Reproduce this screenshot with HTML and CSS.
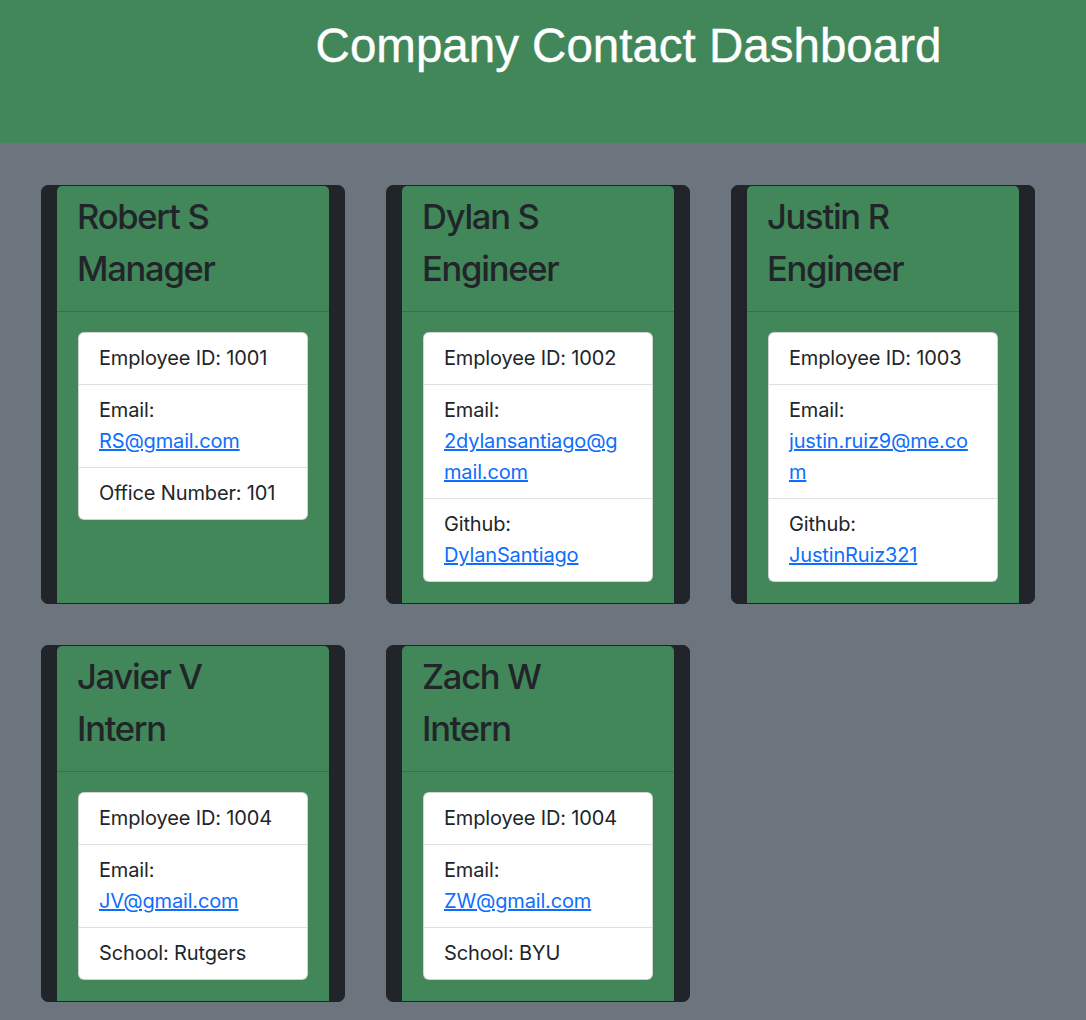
FILE: index.html
```html
<!DOCTYPE html>
<html lang="en">
<head>
<meta charset="utf-8">
<title>Company Contact Dashboard</title>
<link rel="stylesheet" href="styles.css">
</head>
<body>
<header class="banner">
  <h1 class="title">Company Contact Dashboard</h1>
</header>
<main class="grid">
  <div class="col">
    <div class="card">
      <div class="card-header">
        <h2 class="name">Robert S</h2>
        <h2 class="name">Manager</h2>
      </div>
      <div class="card-body">
        <ul class="list">
          <li class="item">Employee ID: 1001</li>
          <li class="item">Email: <a class="link" href="#">RS@gmail.com</a></li>
          <li class="item">Office Number: 101</li>
        </ul>
      </div>
    </div>
  </div>
  <div class="col">
    <div class="card">
      <div class="card-header">
        <h2 class="name">Dylan S</h2>
        <h2 class="name">Engineer</h2>
      </div>
      <div class="card-body">
        <ul class="list">
          <li class="item">Employee ID: 1002</li>
          <li class="item">Email: <a class="link" href="#">2dylansantiago@gmail.com</a></li>
          <li class="item">Github: <a class="link" href="#">DylanSantiago</a></li>
        </ul>
      </div>
    </div>
  </div>
  <div class="col">
    <div class="card">
      <div class="card-header">
        <h2 class="name">Justin R</h2>
        <h2 class="name">Engineer</h2>
      </div>
      <div class="card-body">
        <ul class="list">
          <li class="item">Employee ID: 1003</li>
          <li class="item">Email: <a class="link" href="#">justin.ruiz9@me.com</a></li>
          <li class="item">Github: <a class="link" href="#">JustinRuiz321</a></li>
        </ul>
      </div>
    </div>
  </div>
  <div class="col">
    <div class="card">
      <div class="card-header">
        <h2 class="name">Javier V</h2>
        <h2 class="name">Intern</h2>
      </div>
      <div class="card-body">
        <ul class="list">
          <li class="item">Employee ID: 1004</li>
          <li class="item">Email: <a class="link" href="#">JV@gmail.com</a></li>
          <li class="item">School: Rutgers</li>
        </ul>
      </div>
    </div>
  </div>
  <div class="col">
    <div class="card">
      <div class="card-header">
        <h2 class="name">Zach W</h2>
        <h2 class="name">Intern</h2>
      </div>
      <div class="card-body">
        <ul class="list">
          <li class="item">Employee ID: 1004</li>
          <li class="item">Email: <a class="link" href="#">ZW@gmail.com</a></li>
          <li class="item">School: BYU</li>
        </ul>
      </div>
    </div>
  </div>
</main>
</body>
</html>
```
FILE: styles.css
```css
* { box-sizing: border-box; }
html, body {
  margin: 0;
  padding: 0;
}
body {
  background: #6c757d;
  color: #212529;
  font-family: Inter, "Noto Sans", sans-serif;
  font-size: 20px;
  line-height: 1.5;
  min-height: 1020px;
}
.banner {
  background: #428759;
  height: 143px;
  padding: 17px 0 0 171px;
  text-align: center;
}
.title {
  margin: 0;
  font-family: "Liberation Sans", Arial, sans-serif;
  font-weight: 400;
  font-size: 47.5px;
  line-height: 1.2;
  color: #ffffff;
  -webkit-text-stroke: 0.4px #ffffff;
}
.grid {
  display: grid;
  grid-template-columns: repeat(3, 304px);
  column-gap: 41px;
  row-gap: 41px;
  padding: 42px 0 18px 41px;
}
.col {
  background: #212529;
  border: 1px solid #212529;
  border-radius: 7px;
  padding: 0 15px;
  display: flex;
}
.card {
  flex: 1;
  background: #428759;
  border-radius: 5px 5px 0 0;
  display: flex;
  flex-direction: column;
  overflow-wrap: break-word;
  min-width: 0;
}
.card-header {
  padding: 10px 20px 11px;
  border-bottom: 1px solid rgba(0, 0, 0, 0.175);
}
.name {
  margin: 0 0 10px;
  font-size: 34.5px;
  line-height: 42px;
  font-weight: 500;
  color: #212529;
  letter-spacing: -1.25px;
}
.card-body {
  padding: 20px 21px 21px;
}
.list {
  list-style: none;
  margin: 0;
  padding: 0;
  background: #fff;
  border: 1px solid rgba(0, 0, 0, 0.175);
  border-radius: 6px;
}
.item {
  padding: 10px 20px;
  line-height: 31px;
  border-bottom: 1px solid rgba(0, 0, 0, 0.125);
  letter-spacing: -0.15px;
}
.item:last-child {
  border-bottom: 0;
}
.link {
  color: #0d6efd;
  text-decoration: underline;
}
```
